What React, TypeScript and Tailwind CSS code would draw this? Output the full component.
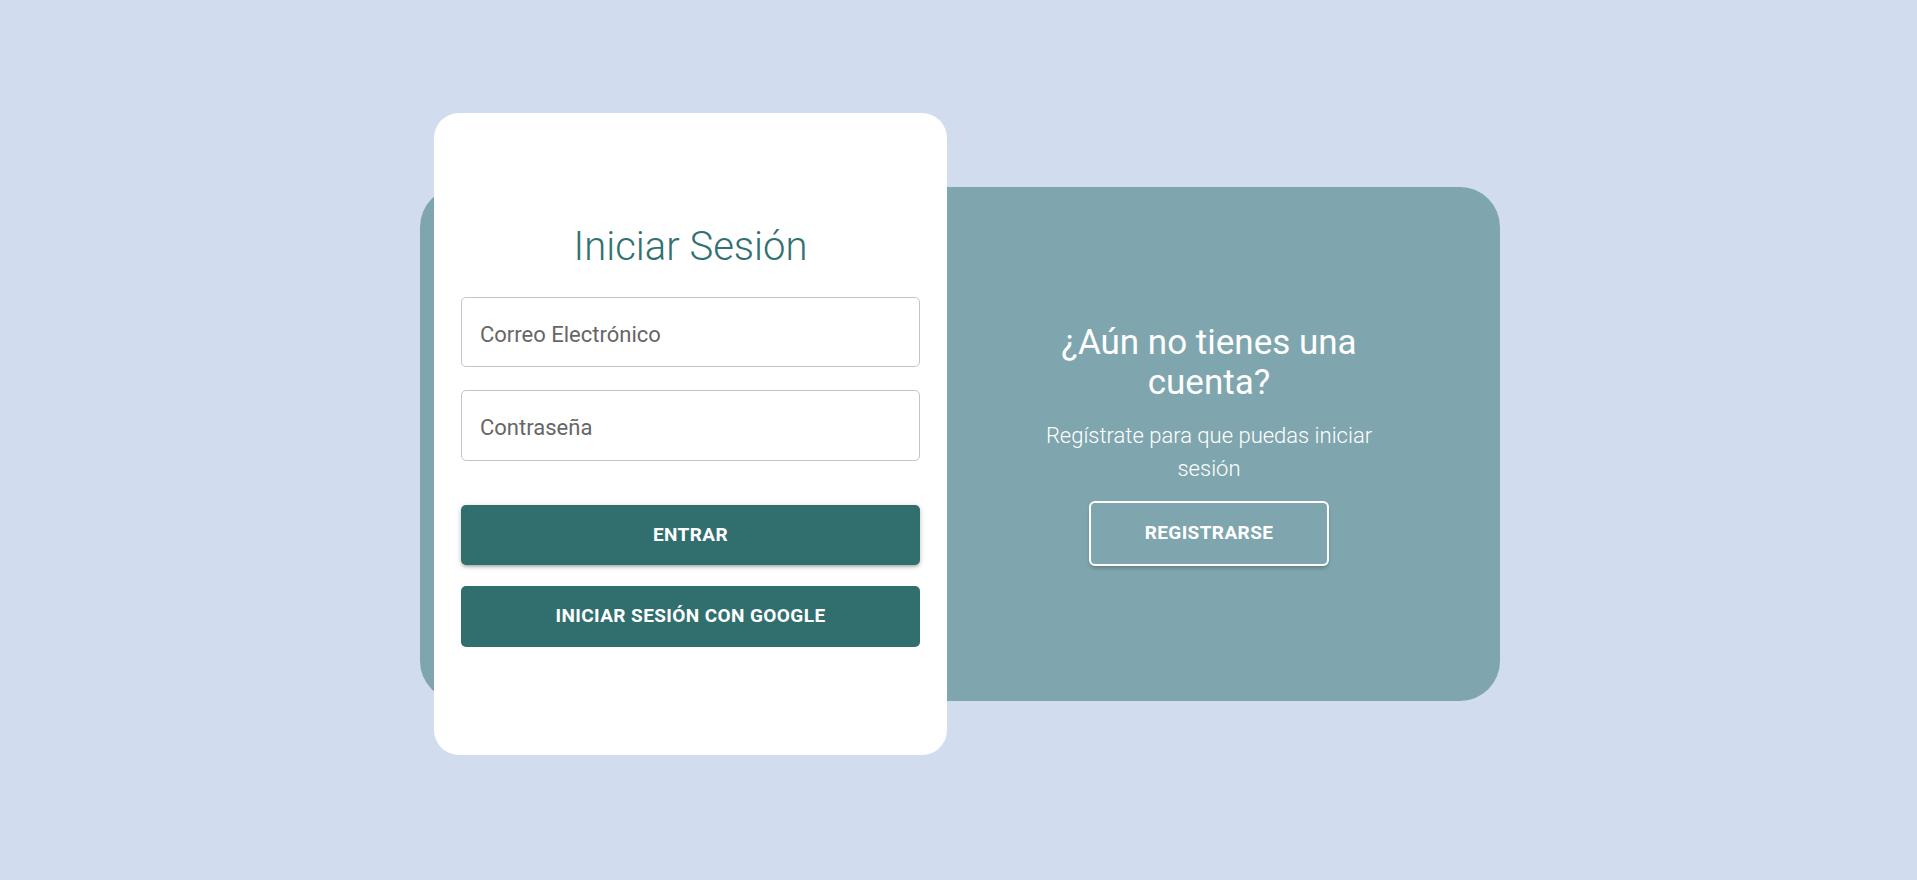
import React, { useState } from 'react';

const font = { fontFamily: 'Roboto, "Noto Sans", sans-serif' };

const App: React.FC = () => {
  const [email, setEmail] = useState('');
  const [password, setPassword] = useState('');

  return (
    <div
      className="min-h-screen w-full bg-[#d1dcee] flex items-center justify-center pt-2 pl-[3px]"
      style={font}
    >
      <div className="relative w-[1080px] h-[514px] rounded-[40px] bg-[#7fa6ae] flex">
        {/* login card, overlapping the panel */}
        <div className="absolute left-[14px] top-[-74px] w-[513px] h-[642px] rounded-[25px] bg-white flex flex-col px-[27px] pt-[108px]">
          <h1 className="h-[52px] leading-[52px] text-center text-[40px] font-light text-[#327171]">
            Iniciar Sesión
          </h1>
          <input
            type="email"
            value={email}
            onChange={(e) => setEmail(e.target.value)}
            placeholder="Correo Electrónico"
            className="mt-[24px] h-[70px] w-full rounded-[5px] border border-[#c4c4c4] px-[18px] pt-[4px] text-[22px] text-[#333] placeholder:text-[#666] outline-none"
          />
          <input
            type="password"
            value={password}
            onChange={(e) => setPassword(e.target.value)}
            placeholder="Contraseña"
            className="mt-[23px] h-[71px] w-full rounded-[5px] border border-[#c4c4c4] px-[18px] pt-[4px] text-[22px] text-[#333] placeholder:text-[#666] outline-none"
          />
          <button className="mt-[44px] h-[60px] w-full rounded-[5px] bg-[#316f6f] text-white text-[19px] font-bold uppercase tracking-[0.4px] shadow-[0_3px_3px_-2px_rgba(0,0,0,0.2),0_2px_4px_0_rgba(0,0,0,0.14),0_1px_6px_0_rgba(0,0,0,0.12)]">
            Entrar
          </button>
          <button className="mt-[21px] h-[61px] w-full rounded-[5px] bg-[#316f6f] text-white text-[19px] font-bold uppercase tracking-[0.4px]">
            Iniciar sesión con Google
          </button>
        </div>

        <div className="w-[498px] shrink-0" />

        <div className="flex-1 flex flex-col items-center justify-center text-white text-center">
          <h2 className="w-[340px] text-[35px] leading-[40px] font-normal">
            ¿Aún no tienes una cuenta?
          </h2>
          <p className="mt-[16px] w-[340px] text-[22px] leading-[33px] font-light">
            Regístrate para que puedas iniciar sesión
          </p>
          <button className="mt-[16px] w-[240px] h-[65px] rounded-[6px] border-2 border-white text-white text-[19px] font-bold uppercase tracking-[0.4px] shadow-[0_3px_4px_-1px_rgba(0,0,0,0.25)]">
            Registrarse
          </button>
        </div>
      </div>
    </div>
  );
};

export default App;
